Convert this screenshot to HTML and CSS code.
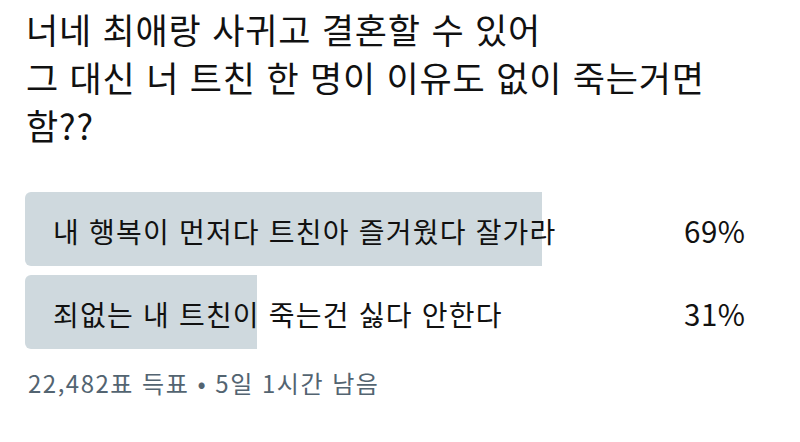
FILE: index.html
```html
<!DOCTYPE html>
<html lang="ko">
<head>
<meta charset="utf-8">
<title>투표</title>
<link rel="stylesheet" href="styles.css">
</head>
<body>
  <article class="poll-card">
    <p class="question">너네 최애랑 사귀고 결혼할 수 있어<br>그 대신 너 트친 한 명이 이유도 없이 죽는거면<br>함??</p>
    <div class="choices">
      <div class="choice">
        <div class="fill" style="width: 69%"></div>
        <span class="label">내 행복이 먼저다 트친아 즐거웠다 잘가라</span>
        <span class="pct">69%</span>
      </div>
      <div class="choice">
        <div class="fill" style="width: 31%"></div>
        <span class="label">죄없는 내 트친이 죽는건 싫다 안한다</span>
        <span class="pct">31%</span>
      </div>
    </div>
    <p class="meta">22,482표 득표 • 5일 1시간 남음</p>
  </article>
</body>
</html>
```
FILE: styles.css
```css
html, body {
  margin: 0;
  padding: 0;
  background: #ffffff;
}

body {
  font-family: "Noto Sans CJK KR", "Noto Sans", sans-serif;
  font-weight: 400;
  color: #0f1419;
  width: 800px;
  height: 442px;
  overflow: hidden;
}

.poll-card {
  padding: 5px 26px 0 25px;
  display: flex;
  flex-direction: column;
}

.question {
  margin: 0 0 0 1px;
  font-size: 35px;
  line-height: 48px;
  letter-spacing: 0.8px;
  color: #111111;
}

.choices {
  margin-top: 43px;
  display: flex;
  flex-direction: column;
  gap: 9px;
}

.choice {
  position: relative;
  height: 74px;
  display: flex;
  align-items: center;
  justify-content: space-between;
  padding: 0 29px 0 28px;
}

/* result bar drawn beneath the option text */
.fill {
  position: absolute;
  left: 0;
  top: 0;
  bottom: 0;
  background: #cfd9de;
  border-radius: 6px 0 0 6px;
}

.label,
.pct {
  position: relative;
  line-height: 1;
  padding-top: 3px;
  color: #111111;
}

.label {
  font-size: 28px;
  letter-spacing: 1.2px;
}

.pct {
  font-size: 29.5px;
  letter-spacing: 0.5px;
  margin-right: -0.5px;
}

.meta {
  margin: 19px 0 0 3px;
  font-size: 24px;
  line-height: 30px;
  letter-spacing: 1.5px;
  color: #536471;
}
```
